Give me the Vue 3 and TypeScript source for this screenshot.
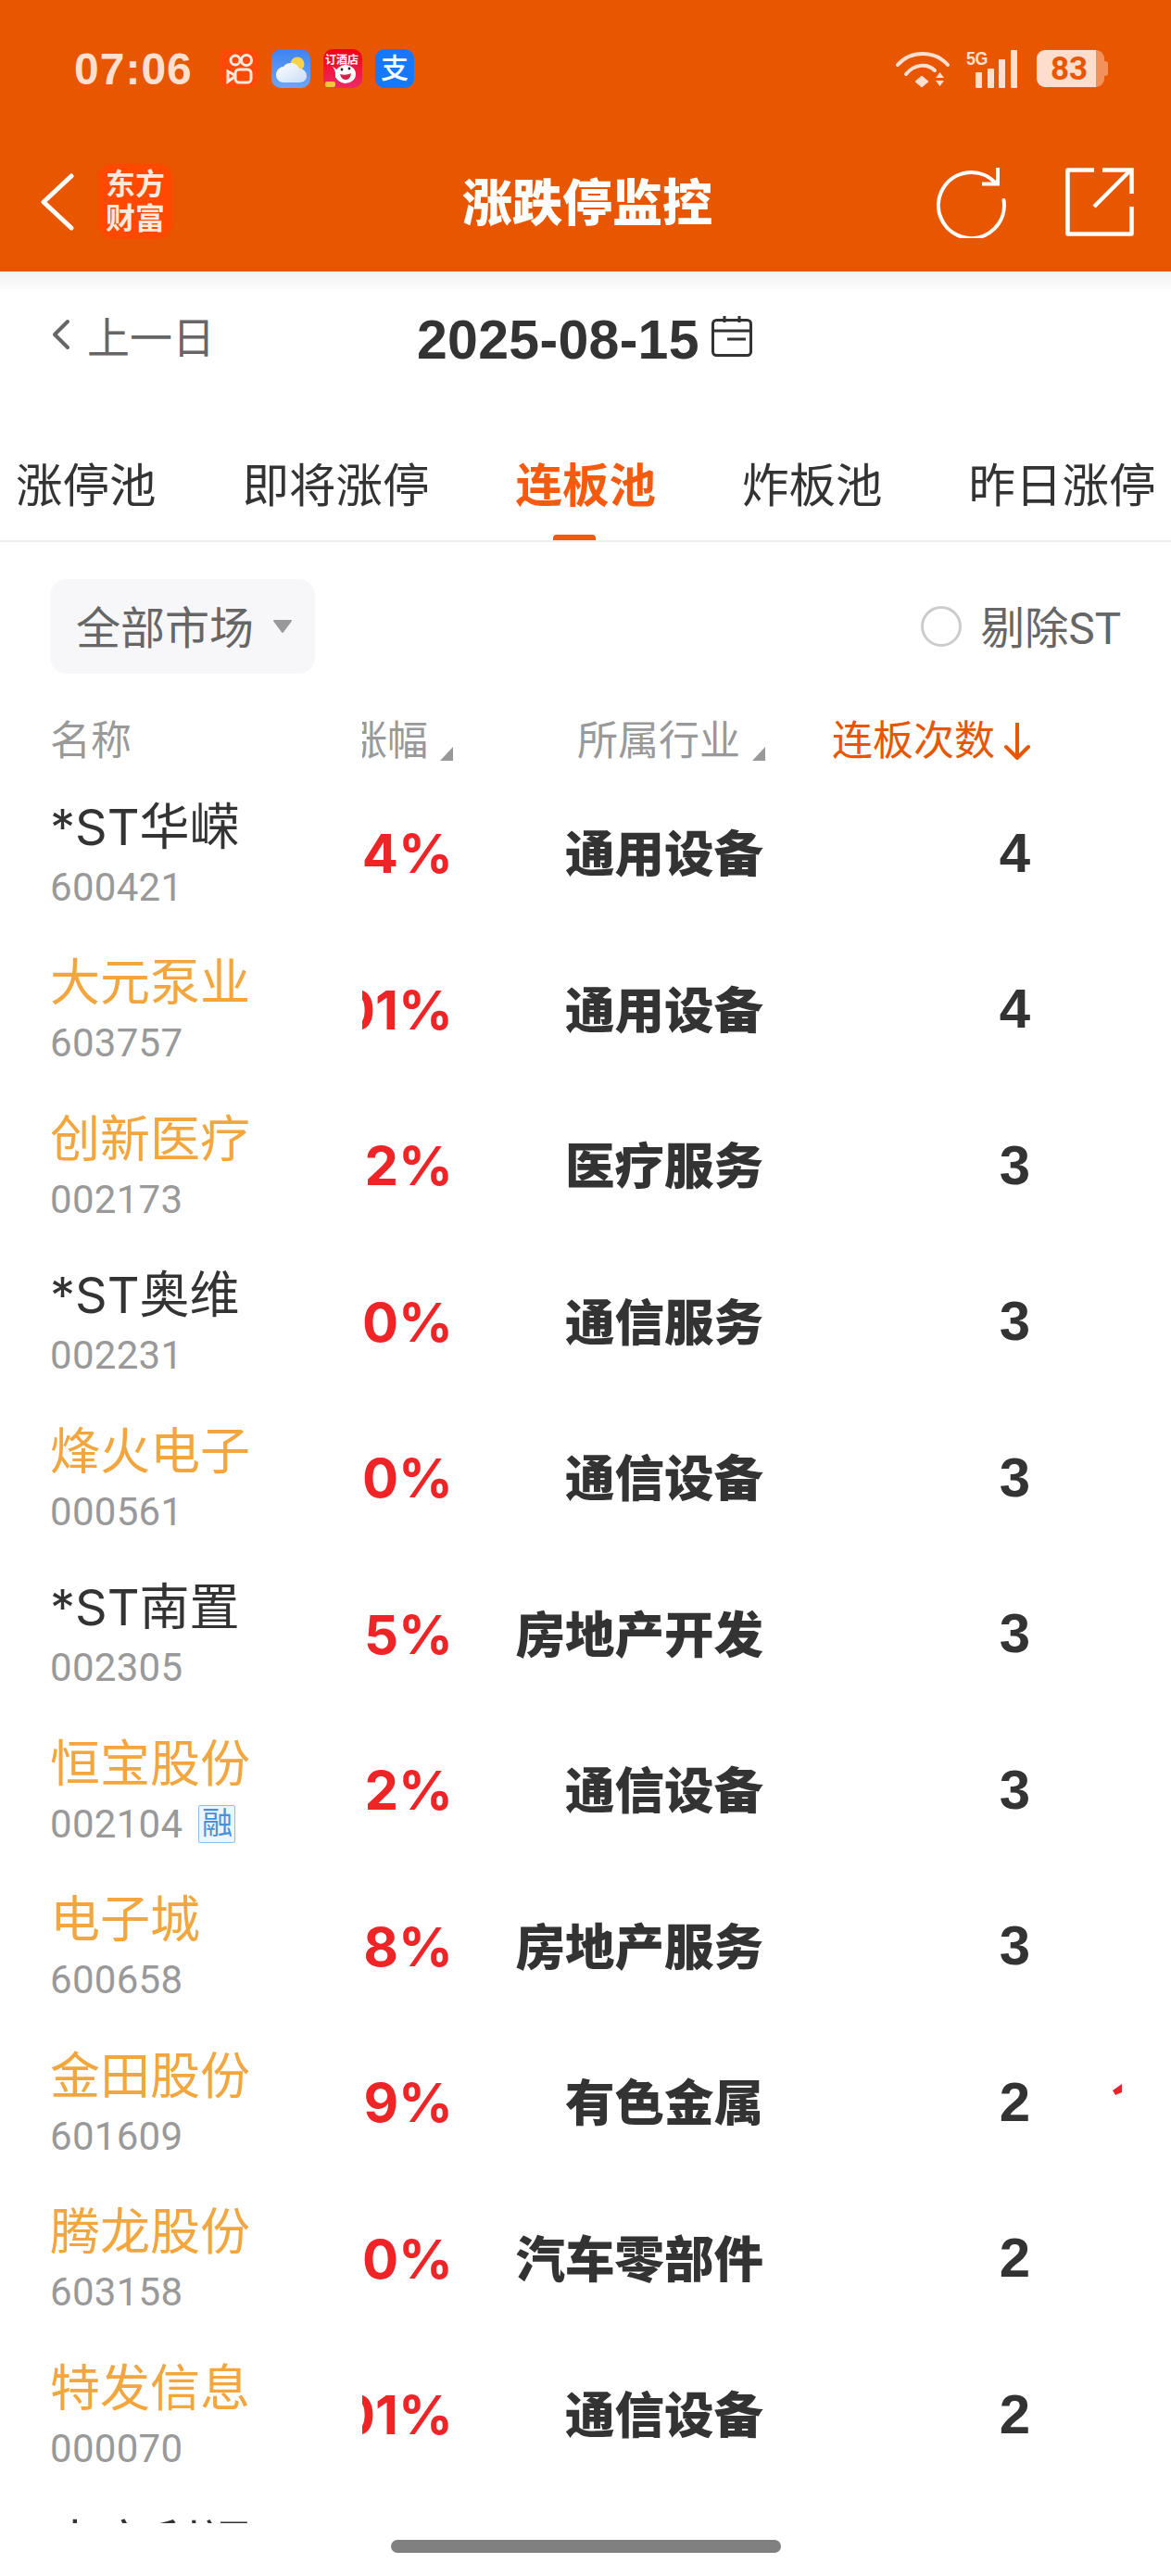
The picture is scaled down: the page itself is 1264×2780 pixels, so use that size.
<template>
  <div class="page">
    <header class="top">
      <div class="status">
        <span class="clock">07:06</span>
        <div class="apps">
          <svg class="app" viewBox="0 0 42 42">
            <rect width="42" height="42" rx="10" fill="#ff4906" />
            <g fill="none" stroke="#ffe9dc" stroke-width="3">
              <circle cx="17" cy="12" r="5" />
              <circle cx="29" cy="12" r="5.5" />
              <rect x="17" y="22" width="17" height="14" rx="4" />
              <path d="M16 30 9 35V24l7 4" />
            </g>
          </svg>
          <svg class="app" viewBox="0 0 42 42">
            <defs>
              <linearGradient id="sky" x1="0" y1="0" x2="0" y2="1">
                <stop offset="0" stop-color="#3f83f2" />
                <stop offset="1" stop-color="#6ea6f7" />
              </linearGradient>
              <linearGradient id="cloud" x1="0" y1="0" x2="1" y2="1">
                <stop offset="0" stop-color="#ffffff" />
                <stop offset="1" stop-color="#c9dcf8" />
              </linearGradient>
            </defs>
            <rect width="42" height="42" rx="10" fill="url(#sky)" />
            <circle cx="28" cy="16" r="7.5" fill="#f7d24a" />
            <path d="M13 36c-5 0-8-4-8-8 0-6 5-9 8-9 3-5 14-6 17 2 5 0 8 4 8 8 0 4-3 7-8 7z" fill="url(#cloud)" />
          </svg>
          <svg class="app" viewBox="0 0 42 42">
            <defs>
              <linearGradient id="hotel" x1="0" y1="0" x2="0" y2="1">
                <stop offset="0" stop-color="#f40012" />
                <stop offset="1" stop-color="#ee2a68" />
              </linearGradient>
            </defs>
            <rect width="42" height="42" rx="10" fill="url(#hotel)" />
            <text x="20" y="16" text-anchor="middle" class="hotel-text">订酒店</text>
            <path d="M9 18c3 3 5 8 4 13l5 1-1-8z" fill="#fff" />
            <ellipse cx="24" cy="27" rx="11" ry="10" fill="#fff" />
            <path d="M18 27c4 1 8 1 12-1-1 6-3 7-6 7s-5-2-6-6z" fill="#d8204a" />
            <circle cx="20" cy="22" r="1.4" fill="#222" />
            <circle cx="28" cy="21" r="1.4" fill="#222" />
            <rect x="2" y="35" width="11" height="6" rx="2" fill="#f8c43a" />
          </svg>
          <svg class="app" viewBox="0 0 42 42">
            <rect width="42" height="42" rx="10" fill="#1677ff" />
            <text x="21" y="31" text-anchor="middle" class="alipay-text">支</text>
          </svg>
        </div>
        <div class="indicators">
          <svg class="wifi" viewBox="0 0 58 41">
            <g fill="none" stroke="#ffdfd0" stroke-width="4" stroke-linecap="round">
              <path d="M2 16C16 0 42 0 56 16" />
              <path d="M11 26C20 15 34 14 42 22" />
            </g>
            <path d="M28 28l7 6-7 6-7-6z" fill="#ffdfd0" stroke="#ffdfd0" stroke-linejoin="round" />
            <path d="M52 30h-9l4.500-6zM52 33h-9l4.500 6z" fill="#ffdfd0" />
          </svg>
          <div class="signal">
            <span class="net">5G</span>
            <i class="bar b1"></i>
            <i class="bar b2"></i>
            <i class="bar b3"></i>
            <i class="bar b4"></i>
          </div>
          <div class="battery">
            <div class="battery-body"><span>83</span></div>
            <i class="battery-nub"></i>
          </div>
        </div>
      </div>
      <div class="nav">
        <div class="nav-left">
          <svg class="nav-back" viewBox="0 0 36 62">
            <path d="M33 3 3 31l30 28" fill="none" stroke="#fff" stroke-width="5" stroke-linecap="round" stroke-linejoin="round" />
          </svg>
          <div class="logo">东方<br />财富</div>
        </div>
        <div class="nav-title">涨跌停监控</div>
        <div class="nav-right">
          <svg class="nav-icon" viewBox="0 0 78 78">
            <g fill="none" stroke="#fff" stroke-width="4">
              <path d="M65 19A35.500 35.500 0 1 0 73.500 37" stroke-linecap="round" />
              <path d="M67 2V19.500H50" />
            </g>
          </svg>
          <svg class="nav-icon share" viewBox="0 0 74 74">
            <g fill="none" stroke="#fff" stroke-width="4.500">
              <path d="M31 2.500H2.500V71.500H71.500V42" stroke-linejoin="round" />
              <path d="M31 42 70 3" />
              <path d="M40 2.500H71.500V28" />
            </g>
          </svg>
        </div>
      </div>
    </header>

    <div class="date-row">
      <div class="prev-day">
        <svg class="prev-icon" viewBox="0 0 20 34">
          <path d="M17 3 3 17l14 14" fill="none" stroke="#666" stroke-width="4" stroke-linecap="round" stroke-linejoin="round" />
        </svg>
        <span>上一日</span>
      </div>
      <span class="date">2025-08-15</span>
      <svg class="calendar" viewBox="0 0 44 44">
        <g fill="none" stroke="#333" stroke-width="3">
          <rect x="1.500" y="4.500" width="41" height="38" rx="4" />
          <path d="M2 16H42M14 0V7M30 0V7" />
          <path d="M17 25H37" />
        </g>
      </svg>
    </div>

    <nav class="tabs">
      <div v-for="tab in tabs" :key="tab" class="tab" :class="{ active: tab === activeTab }">{{ tab }}</div>
    </nav>

    <div class="list-area">
      <div class="filter-row">
        <div class="market">
          <span class="market-label">全部市场</span>
          <svg class="market-caret" viewBox="0 0 22 16">
            <path d="M2 2H20L11 14z" fill="#999" stroke="#999" stroke-width="2" stroke-linejoin="round" />
          </svg>
        </div>
        <div class="exclude">
          <i class="radio"></i>
          <span class="exclude-label">剔除ST</span>
        </div>
      </div>

      <div class="table-head">
        <div class="fixed-col">名称</div>
        <div class="scroll-cols">
          <div class="cell head-cell">涨幅<i class="sort-mark"></i></div>
          <div class="cell head-cell">所属行业<i class="sort-mark"></i></div>
          <div class="cell head-cell sorted">
            连板次数
            <svg class="sort-arrow" viewBox="0 0 28 40">
              <path d="M14 1V37M2 26 14 38 26 26" fill="none" stroke="#e85600" stroke-width="4" stroke-linecap="round" stroke-linejoin="round" />
            </svg>
          </div>
          <div class="cell"></div>
        </div>
      </div>

      <div v-for="row in rows" :key="row.name" class="row">
        <div class="fixed-col stock">
          <div class="name" :class="{ hot: row.hot }">{{ row.name }}</div>
          <div class="code">
            <span>{{ row.code }}</span>
            <span v-if="row.margin" class="margin-tag">融</span>
          </div>
        </div>
        <div class="scroll-cols">
          <div class="cell pct">{{ row.pct }}</div>
          <div class="cell industry">{{ row.industry }}</div>
          <div class="cell count">{{ row.count }}</div>
          <div class="cell">
            <svg v-if="row.mark" class="edge-mark" viewBox="0 0 10 13">
              <path d="M10 0 0 7l3 5 7-3z" fill="#e8232a" />
            </svg>
          </div>
        </div>
      </div>
    </div>

    <div class="home-bar-wrap"><div class="home-bar"></div></div>
  </div>
</template>

<script setup lang="ts">
interface StockRow {
  name: string;
  code: string;
  pct: string;
  industry: string;
  count: string;
  hot: boolean;
  margin?: boolean;
  mark?: boolean;
}

const tabs = ['涨停池', '即将涨停', '连板池', '炸板池', '昨日涨停'];
const activeTab = '连板池';

const rows: StockRow[] = [
  { name: '*ST华嵘', code: '600421', pct: '5.04%', industry: '通用设备', count: '4', hot: false },
  { name: '大元泵业', code: '603757', pct: '10.01%', industry: '通用设备', count: '4', hot: true },
  { name: '创新医疗', code: '002173', pct: '10.02%', industry: '医疗服务', count: '3', hot: true },
  { name: '*ST奥维', code: '002231', pct: '5.10%', industry: '通信服务', count: '3', hot: false },
  { name: '烽火电子', code: '000561', pct: '10.10%', industry: '通信设备', count: '3', hot: true },
  { name: '*ST南置', code: '002305', pct: '5.05%', industry: '房地产开发', count: '3', hot: false },
  { name: '恒宝股份', code: '002104', pct: '10.02%', industry: '通信设备', count: '3', hot: true, margin: true },
  { name: '电子城', code: '600658', pct: '10.08%', industry: '房地产服务', count: '3', hot: true },
  { name: '金田股份', code: '601609', pct: '10.09%', industry: '有色金属', count: '2', hot: true, mark: true },
  { name: '腾龙股份', code: '603158', pct: '10.10%', industry: '汽车零部件', count: '2', hot: true },
  { name: '特发信息', code: '000070', pct: '10.01%', industry: '通信设备', count: '2', hot: true },
  { name: '中京利福', code: '', pct: '', industry: '', count: '', hot: false },
];
</script>

<style>
html,
body {
  background: #fff;
}
</style>

<style scoped>
.page {
  width: 1264px;
  height: 2780px;
  overflow: hidden;
  background: #fff;
  font-family: Roboto, "Noto Sans CJK SC", sans-serif;
  color: #333;
}

.top {
  height: 293px;
  background: #e85600;
}

.status {
  height: 148px;
  display: flex;
  align-items: center;
  padding: 0 68px 0 80px;
}

.clock {
  width: 157px;
  font-family: "Liberation Sans", sans-serif;
  font-size: 48px;
  font-weight: 700;
  letter-spacing: 1px;
  white-space: nowrap;
  color: #ffdfd0;
}

.apps {
  display: flex;
  gap: 14px;
}

.app {
  width: 42px;
  height: 42px;
  display: block;
}

.hotel-text {
  font-size: 12px;
  font-weight: 700;
  fill: #fff;
  font-family: "Noto Sans CJK SC", sans-serif;
}

.alipay-text {
  font-size: 30px;
  font-weight: 500;
  fill: #fff;
  font-family: "Noto Sans CJK SC", sans-serif;
}

.indicators {
  margin-left: auto;
  display: flex;
  align-items: center;
}

.wifi {
  width: 58px;
  height: 41px;
  display: block;
}

.signal {
  width: 56px;
  height: 42px;
  margin-left: 18px;
  display: flex;
  align-items: flex-end;
  gap: 5.500px;
  position: relative;
}

.net {
  position: absolute;
  left: 0;
  top: -2px;
  font-family: "Liberation Sans", sans-serif;
  font-size: 21px;
  font-weight: 700;
  line-height: 24px;
  letter-spacing: -0.5px;
  color: #ffdfd0;
  transform: scaleX(0.85);
  transform-origin: left;
}

.bar {
  width: 7px;
  background: #ffdfd0;
  border-radius: 1px;
}

.b1 {
  height: 17px;
  margin-left: 10px;
}

.b2 {
  height: 21px;
}

.b3 {
  height: 31px;
}

.b4 {
  height: 41px;
}

.battery {
  margin-left: 20px;
  display: flex;
  align-items: center;
}

.battery-body {
  width: 73px;
  height: 40px;
  border-radius: 9px;
  background: linear-gradient(90deg, #ffddcc 0 64px, #f3915c 64px);
  display: flex;
  align-items: center;
  padding-left: 15px;
  box-sizing: border-box;
  font-family: Roboto, sans-serif;
  font-size: 35px;
  font-weight: 700;
  color: #e85600;
}

.battery-nub {
  width: 4px;
  height: 16px;
  background: #f3915c;
  border-radius: 0 3px 3px 0;
}

.nav {
  height: 145px;
  display: grid;
  grid-template-columns: 1fr auto 1fr;
  align-items: center;
  padding: 0 40px 6px 44px;
  box-sizing: border-box;
}

.nav-left {
  display: flex;
  align-items: center;
  gap: 26px;
}

.nav-back {
  width: 36px;
  height: 62px;
  display: block;
}

.logo {
  width: 80px;
  height: 81px;
  border-radius: 16px;
  background: #ff4800;
  color: #ffe9dc;
  font-size: 32px;
  font-weight: 700;
  line-height: 37px;
  text-align: center;
  padding-top: 4px;
  box-sizing: border-box;
}

.nav-title {
  font-size: 54px;
  font-weight: 900;
  line-height: 60px;
  color: #fff;
  padding-top: 7px;
}

.nav-right {
  display: flex;
  justify-content: flex-end;
  align-items: center;
  gap: 62px;
}

.nav-icon {
  width: 78px;
  height: 78px;
  display: block;
}

.share {
  width: 74px;
  height: 74px;
}

.date-row {
  height: 145px;
  display: flex;
  align-items: center;
  padding-left: 55px;
  box-sizing: border-box;
  background: linear-gradient(#f0f0f0, #fff 22px);
}

.prev-day {
  width: 395px;
  display: flex;
  align-items: center;
  gap: 17px;
  font-size: 46px;
  color: #666;
  margin-top: -9px;
}

.prev-icon {
  width: 22px;
  height: 34px;
  display: block;
}

.date {
  margin-top: 2px;
  font-family: "Liberation Sans", sans-serif;
  font-size: 59px;
  font-weight: 700;
  letter-spacing: 0.3px;
  color: #333;
}

.calendar {
  width: 44px;
  height: 44px;
  margin-left: 13px;
  margin-top: -6px;
  display: block;
}

.tabs {
  height: 147px;
  display: flex;
  gap: 93px;
  padding-left: 17px;
  box-sizing: border-box;
  border-bottom: 2px solid #eeeeee;
  overflow: hidden;
}

.tab {
  position: relative;
  font-size: 50.500px;
  line-height: 60px;
  padding-top: 57px;
  white-space: nowrap;
  color: #333;
}

.tab.active {
  font-weight: 700;
  color: #f55a0e;
}

.tab.active::after {
  content: "";
  position: absolute;
  left: 50%;
  bottom: -1px;
  width: 46px;
  height: 7px;
  margin-left: -35px;
  border-radius: 4px 4px 0 0;
  background: #f05a0f;
}

.list-area {
  height: 2138px;
  overflow: hidden;
}

.filter-row {
  display: flex;
  justify-content: space-between;
  align-items: center;
  padding: 40px 54px 0 54px;
}

.market {
  width: 286px;
  height: 102px;
  border-radius: 18px;
  background: #f7f7f9;
  display: flex;
  align-items: center;
  gap: 20px;
  padding-left: 28px;
  box-sizing: border-box;
  font-size: 48px;
  color: #666;
}

.market-label {
  margin-top: -5px;
}

.market-caret {
  width: 22px;
  height: 16px;
  display: block;
}

.exclude {
  display: flex;
  align-items: center;
  gap: 20px;
  font-size: 47.500px;
  color: #666;
}

.exclude-label {
  margin-top: -3px;
}

.radio {
  width: 44px;
  height: 44px;
  border: 3.500px solid #cccccc;
  border-radius: 50%;
  box-sizing: border-box;
}

.table-head {
  height: 73px;
  margin-top: 36px;
  display: flex;
  align-items: center;
  font-size: 44px;
  line-height: 50px;
  color: #999;
}

.fixed-col {
  width: 391px;
  padding-left: 54px;
  box-sizing: border-box;
  flex: none;
}

.stock {
  padding-top: 4px;
}

.scroll-cols {
  width: 820px;
  height: 100%;
  flex: none;
  display: grid;
  grid-template-columns: 98px 337px 286px 99px;
  overflow: hidden;
}

.cell {
  display: flex;
  justify-content: flex-end;
  align-items: center;
  white-space: nowrap;
  min-width: 0;
}

.head-cell {
  align-items: center;
}

.sort-mark {
  width: 0;
  height: 0;
  margin-left: 13px;
  margin-top: 27px;
  border-left: 14px solid transparent;
  border-bottom: 15px solid #999;
}

.sorted {
  color: #e85600;
  gap: 10px;
}

.sort-arrow {
  width: 28px;
  height: 40px;
  display: block;
}

.row {
  height: 168.500px;
  display: flex;
  align-items: center;
}

.name {
  font-family: Inter, "Noto Sans CJK SC", sans-serif;
  font-size: 54px;
  line-height: 66px;
  white-space: nowrap;
  color: #333;
}

.name.hot {
  color: #f2a63d;
}

.code {
  display: flex;
  align-items: center;
  gap: 17px;
  height: 54px;
  margin-top: 5px;
  font-size: 42px;
  line-height: 54px;
  letter-spacing: 0.3px;
  color: #999;
}

.margin-tag {
  width: 40px;
  height: 41px;
  border: 1.500px solid #93bde9;
  border-radius: 2px;
  background: #edf5fd;
  box-sizing: border-box;
  font-size: 33px;
  line-height: 37px;
  letter-spacing: 0;
  text-align: center;
  color: #4a90d9;
}

.pct {
  padding-top: 2px;
  font-family: Inter, sans-serif;
  font-size: 58px;
  font-weight: 700;
  color: #ee2426;
}

.industry {
  padding-right: 2px;
  padding-bottom: 5px;
  font-size: 53.500px;
  font-weight: 900;
  color: #333;
}

.count {
  font-family: "Liberation Sans", sans-serif;
  font-size: 60px;
  font-weight: 700;
  color: #333;
}

.edge-mark {
  width: 10px;
  height: 13px;
  margin-bottom: 25px;
  display: block;
}

.home-bar-wrap {
  display: flex;
  justify-content: center;
  padding-top: 18px;
}

.home-bar {
  width: 421px;
  height: 14px;
  border-radius: 7px;
  background: #808080;
}
</style>
